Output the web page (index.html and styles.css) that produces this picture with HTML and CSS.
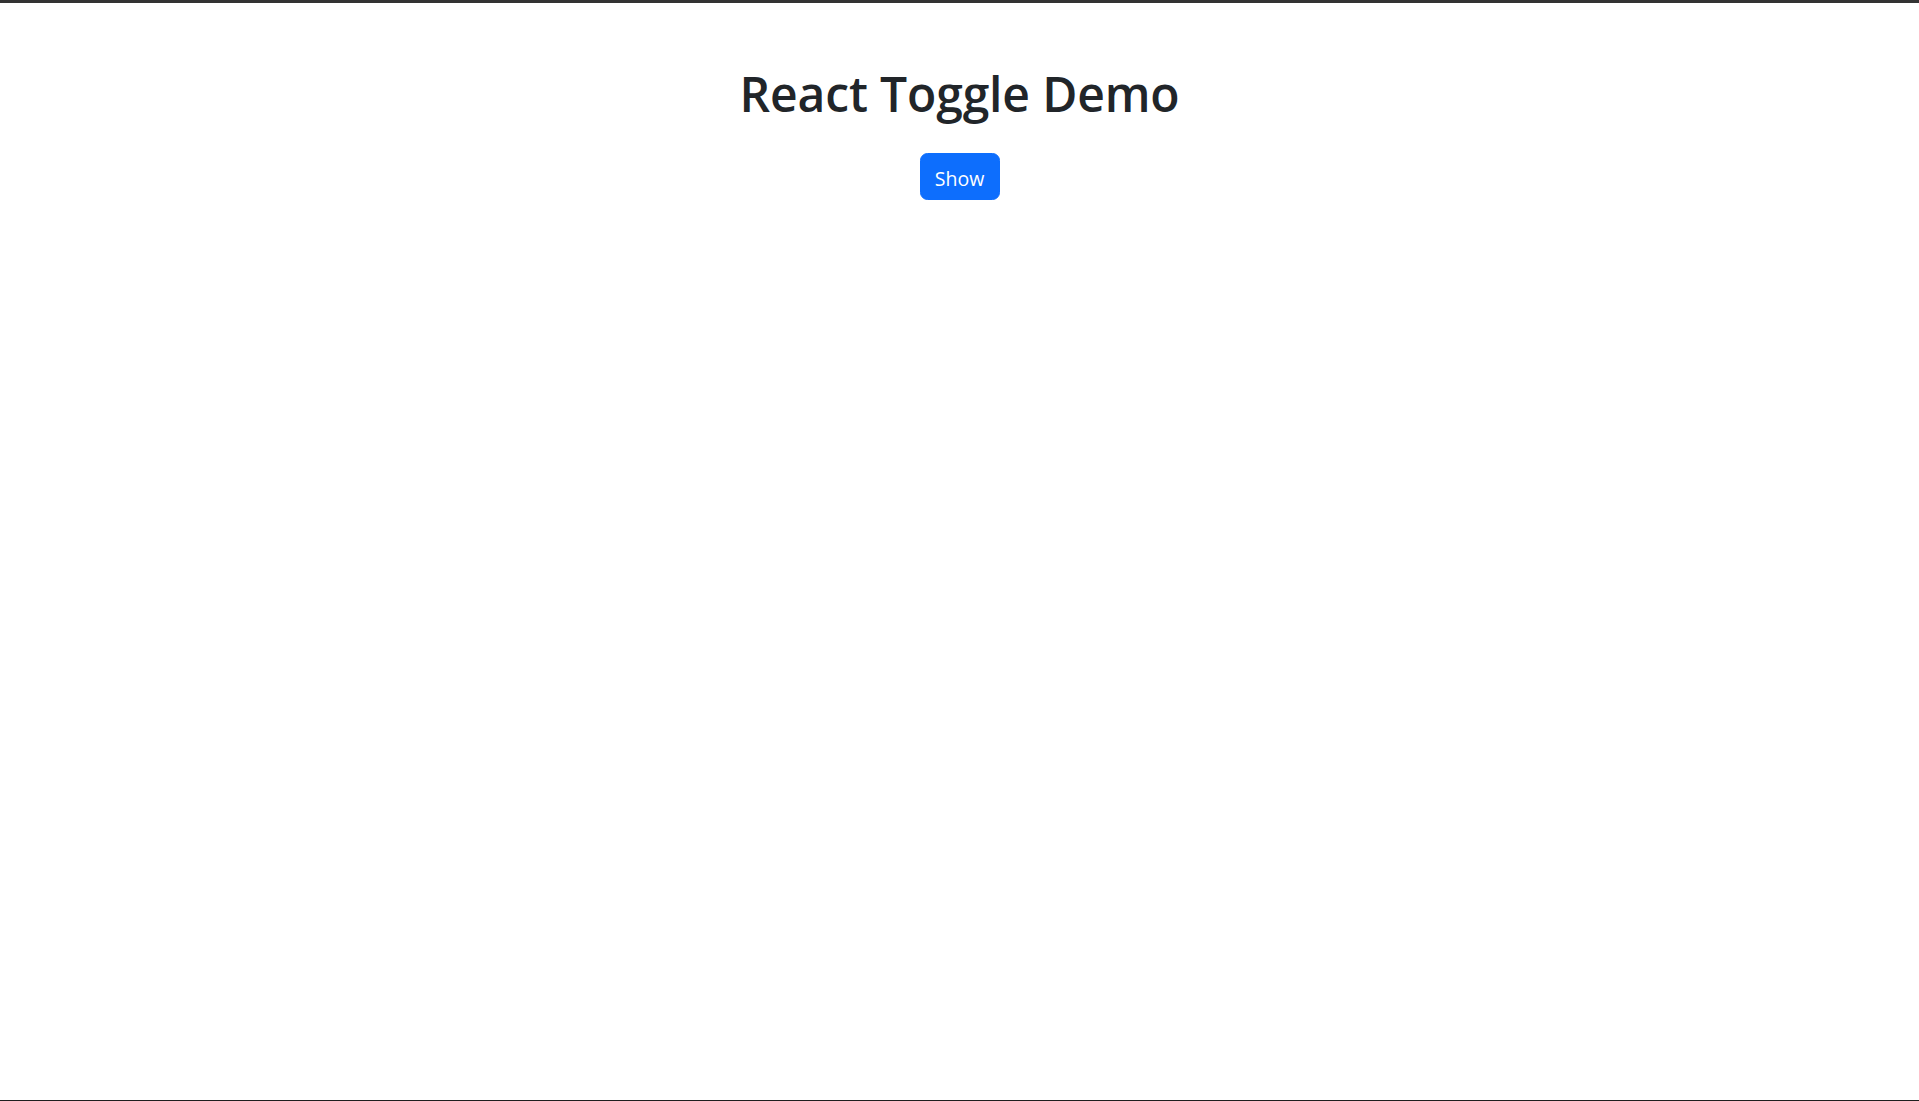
FILE: index.html
```html
<!DOCTYPE html>
<html lang="en">
<head>
<meta charset="utf-8">
<title>React Toggle Demo</title>
<link rel="stylesheet" href="styles.css">
</head>
<body>
<div class="frame">
  <main class="app">
    <h1 class="title">React Toggle Demo</h1>
    <button class="btn-primary" type="button">Show</button>
  </main>
</div>
</body>
</html>
```

FILE: styles.css
```css
* { box-sizing: border-box; }
html, body { margin: 0; padding: 0; background: #fff; }
body {
  font-family: "Open Sans", "Noto Sans", sans-serif;
  color: #212529;
}
.frame {
  height: 1101px;
  border-top: 3px solid #333333;
  border-bottom: 1px solid #1e1e1e;
  overflow: hidden;
}
.app {
  display: flex;
  flex-direction: column;
  align-items: center;
  padding-top: 62px;
}
.title {
  margin: 0 0 30px 0;
  font-size: 48px;
  font-weight: 550;
  line-height: 1.2;
  letter-spacing: -0.15px;
  color: #212529;
}
.btn-primary {
  font-family: inherit;
  font-size: 19.5px;
  line-height: 1.5;
  padding: 10px 14px 5px;
  height: 47px;
  width: 80px;
  border: 1px solid #0d6efd;
  border-radius: 7.5px;
  background: #0d6efd;
  color: #fff;
  cursor: pointer;
}
```
